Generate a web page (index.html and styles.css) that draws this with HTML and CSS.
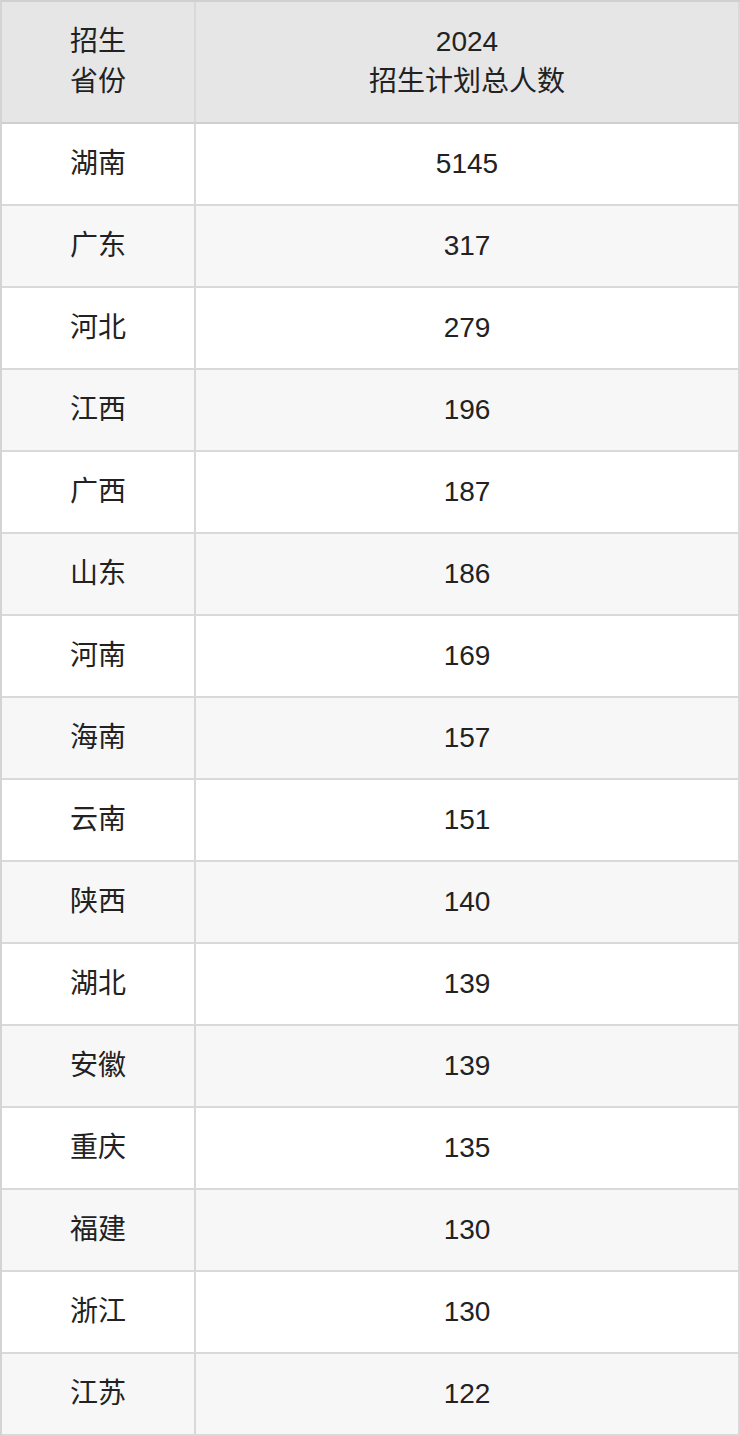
FILE: index.html
```html
<!DOCTYPE html>
<html lang="zh">
<head>
<meta charset="utf-8">
<title>招生计划</title>
<link rel="stylesheet" href="styles.css">
</head>
<body>
<table class="plan">
  <colgroup><col class="c-prov"><col class="c-num"></colgroup>
  <thead>
    <tr><th>招生<br>省份</th><th>2024<br>招生计划总人数</th></tr>
  </thead>
  <tbody>
    <tr><td>湖南</td><td>5145</td></tr>
    <tr><td>广东</td><td>317</td></tr>
    <tr><td>河北</td><td>279</td></tr>
    <tr><td>江西</td><td>196</td></tr>
    <tr><td>广西</td><td>187</td></tr>
    <tr><td>山东</td><td>186</td></tr>
    <tr><td>河南</td><td>169</td></tr>
    <tr><td>海南</td><td>157</td></tr>
    <tr><td>云南</td><td>151</td></tr>
    <tr><td>陕西</td><td>140</td></tr>
    <tr><td>湖北</td><td>139</td></tr>
    <tr><td>安徽</td><td>139</td></tr>
    <tr><td>重庆</td><td>135</td></tr>
    <tr><td>福建</td><td>130</td></tr>
    <tr><td>浙江</td><td>130</td></tr>
    <tr><td>江苏</td><td>122</td></tr>
  </tbody>
</table>
</body>
</html>
```

FILE: styles.css
```css
html, body {
  margin: 0;
  padding: 0;
  background: #ffffff;
}
.plan {
  border-collapse: separate;
  border-spacing: 0;
  table-layout: fixed;
  width: 740px;
  border-top: 2px solid #d0d0d0;
  border-left: 2px solid #d4d4d4;
  font-family: "Liberation Sans", "Noto Sans CJK SC", sans-serif;
  font-size: 28px;
  color: #222222;
}
.c-prov { width: 194px; }
.c-num { width: 544px; }
.plan th,
.plan td {
  padding: 20px 0;
  line-height: 40px;
  height: 40px;
  text-align: center;
  font-weight: normal;
  border-right: 2px solid #d9d9d9;
  border-bottom: 2px solid #d9d9d9;
  vertical-align: middle;
}
.plan th {
  background: #e6e6e6;
  border-bottom-color: #cfcfcf;
}
.plan tbody tr:nth-child(even) td {
  background: #f7f7f7;
}
```
